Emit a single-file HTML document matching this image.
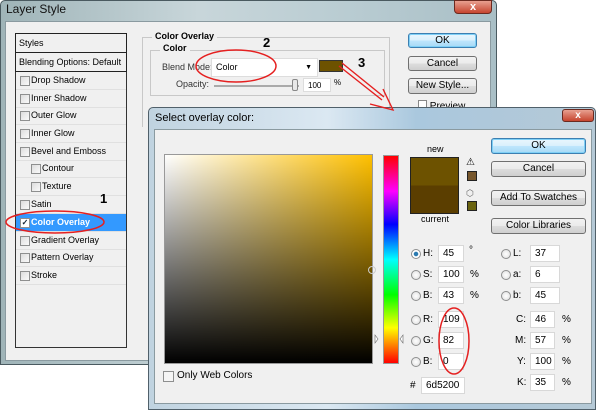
<!DOCTYPE html>
<html><head><style>
*{margin:0;padding:0;box-sizing:border-box}
body{width:600px;height:410px;position:relative;overflow:hidden;background:#fff;font-family:"Liberation Sans",sans-serif;font-size:9px;color:#000}
.a{position:absolute}
.btn{position:absolute;border:1px solid #707070;border-radius:3px;background:linear-gradient(#f2f2f2,#ebebeb 50%,#dddddd 51%,#cfcfcf);text-align:center;font-size:10px;line-height:13px}
.btn.def{border-color:#3c7fb1;background:linear-gradient(#eaf6fd,#d9f0fc 50%,#bee6fd 51%,#a7d9f5);box-shadow:0 0 0 1px #7fd0f6 inset}
.row{position:absolute;left:16px;width:110px;height:18px;border-bottom:1px solid #e0e0e0;line-height:17px}
.cb{position:absolute;width:10px;height:10px;border:1px solid #8e8f8f;background:linear-gradient(135deg,#ddd,#fafafa);top:4px}
.inp{position:absolute;background:#fff;border:1px solid #d8d8d8;height:17px;line-height:15px;padding-left:4px;font-size:10px}
.rad{position:absolute;width:10px;height:10px;border-radius:50%;border:1px solid #8e8f8f;background:radial-gradient(#fff,#ddd)}
.lb{position:absolute;font-size:10px}
</style></head><body>
<div class="a" style="left:0;top:0;width:497px;height:365px;background:linear-gradient(90deg,#9fb4b8,#c8d6da 40%,#b9ccd2 70%,#a9bfc6);border:1px solid #4a5a60;border-radius:5px 5px 0 0"></div>
<div class="a" style="left:6px;top:2px;font-size:12px;color:#111">Layer Style</div>
<div class="a" style="left:454px;top:0;width:38px;height:14px;border-radius:0 0 4px 4px;background:linear-gradient(#e8a090,#c6452f);border:1px solid #6b2a20;color:#fff;font-weight:bold;text-align:center;line-height:12px;font-size:11px">x</div>
<div class="a" style="left:5px;top:21px;width:486px;height:340px;background:#f0f0f0;border:1px solid #8a9aa0"></div>
<div class="a" style="left:15px;top:33px;width:112px;height:315px;background:#f0f0f0;border:1px solid #333"></div>
<div class="a" style="left:15px;top:33px;width:112px;height:20px;border:1px solid #222;line-height:18px;padding-left:3px;font-size:9px">Styles</div>
<div class="a" style="left:15px;top:52px;width:112px;height:20px;border:1px solid #222;line-height:18px;padding-left:3px;font-size:9px">Blending Options: Default</div>
<div class="row" style="top:72px"><span class="cb" style="left:4px"></span><span class="a" style="left:15px">Drop Shadow</span></div>
<div class="row" style="top:90px"><span class="cb" style="left:4px"></span><span class="a" style="left:15px">Inner Shadow</span></div>
<div class="row" style="top:107px"><span class="cb" style="left:4px"></span><span class="a" style="left:15px">Outer Glow</span></div>
<div class="row" style="top:125px"><span class="cb" style="left:4px"></span><span class="a" style="left:15px">Inner Glow</span></div>
<div class="row" style="top:143px"><span class="cb" style="left:4px"></span><span class="a" style="left:15px">Bevel and Emboss</span></div>
<div class="row" style="top:160px"><span class="cb" style="left:15px"></span><span class="a" style="left:26px">Contour</span></div>
<div class="row" style="top:178px"><span class="cb" style="left:15px"></span><span class="a" style="left:26px">Texture</span></div>
<div class="row" style="top:196px"><span class="cb" style="left:4px"></span><span class="a" style="left:15px">Satin</span></div>
<div class="row" style="top:214px;background:#3399ff;color:#fff;font-weight:bold"><span class="cb" style="left:4px;background:#fff;color:#123;font-size:8px;line-height:8px;text-align:center">✓</span><span class="a" style="left:15px">Color Overlay</span></div>
<div class="row" style="top:232px"><span class="cb" style="left:4px"></span><span class="a" style="left:15px">Gradient Overlay</span></div>
<div class="row" style="top:249px"><span class="cb" style="left:4px"></span><span class="a" style="left:15px">Pattern Overlay</span></div>
<div class="row" style="top:267px"><span class="cb" style="left:4px"></span><span class="a" style="left:15px">Stroke</span></div>
<div class="a" style="left:142px;top:37px;width:248px;height:90px;border:1px solid #c8c8c8;border-bottom:none"></div>
<div class="a" style="left:152px;top:31px;background:#f0f0f0;padding:0 3px;font-weight:bold">Color Overlay</div>
<div class="a" style="left:150px;top:50px;width:235px;height:46px;border:1px solid #c8c8c8"></div>
<div class="a" style="left:160px;top:43px;background:#f0f0f0;padding:0 3px;font-weight:bold">Color</div>
<div class="a" style="left:162px;top:62px;color:#333">Blend Mode:</div>
<div class="a" style="left:211px;top:58px;width:107px;height:19px;background:#fff;border:1px solid #ddd;line-height:17px;padding-left:4px">Color<span class="a" style="right:5px;top:0;font-size:7px">▼</span></div>
<div class="a" style="left:319px;top:60px;width:24px;height:12px;background:#6d5200;border:1px solid #333"></div>
<div class="a" style="left:176px;top:79px;color:#333">Opacity:</div>
<div class="a" style="left:214px;top:85px;width:85px;height:2px;background:#ccc;border:1px solid #aaa"></div>
<div class="a" style="left:292px;top:79px;width:6px;height:12px;background:#e8e8e8;border:1px solid #888;border-radius:2px"></div>
<div class="a" style="left:303px;top:78px;width:28px;height:14px;background:#fff;border:1px solid #ddd;padding-left:4px;line-height:13px;font-size:8px">100</div>
<div class="a" style="left:334px;top:78px;font-size:8px">%</div>
<div class="btn def" style="left:408px;top:33px;width:69px;height:15px">OK</div>
<div class="btn" style="left:408px;top:56px;width:69px;height:15px">Cancel</div>
<div class="btn" style="left:408px;top:78px;width:69px;height:16px">New Style...</div>
<div class="a" style="left:418px;top:100px;font-size:10px"><span style="display:inline-block;width:9px;height:9px;border:1px solid #888;background:#fff"></span> Preview</div>
<div class="a" style="left:148px;top:107px;width:448px;height:303px;background:linear-gradient(90deg,#c0d3e0,#dbe8f2 40%,#aac8de 60%,#b5c9d6);border:1px solid #50606a;border-radius:5px 5px 0 0"></div>
<div class="a" style="left:155px;top:112px;font-size:11px">Select overlay color:</div>
<div class="a" style="left:562px;top:109px;width:32px;height:13px;border-radius:3px;background:linear-gradient(#e8a090,#c6452f);border:1px solid #6b2a20;color:#fff;font-weight:bold;text-align:center;line-height:11px;font-size:10px">x</div>
<div class="a" style="left:154px;top:129px;width:438px;height:275px;background:#f0f0f0;border:1px solid #8a9aa0"></div>
<div class="a" style="left:164px;top:154px;width:209px;height:210px;border:1px solid #999;background:linear-gradient(to bottom,rgba(0,0,0,0),#000),linear-gradient(to right,#fff,#ffc000)"></div>
<div class="a" style="left:383px;top:155px;width:16px;height:209px;border:1px solid #999;background:linear-gradient(#f00,#f0f 17%,#00f 33%,#0ff 50%,#0f0 67%,#ff0 83%,#f00)"></div>
<div class="a" style="left:427px;top:144px;font-size:9px">new</div>
<div class="a" style="left:410px;top:157px;width:49px;height:57px;border:1px solid #222;background:linear-gradient(#6d5200 50%,#5b3e00 50%)"></div>
<div class="a" style="left:421px;top:214px;font-size:9px">current</div>
<div class="a" style="left:466px;top:157px;font-size:10px">⚠</div>
<div class="a" style="left:467px;top:171px;width:10px;height:10px;background:#77572c;border:1px solid #222"></div>
<div class="a" style="left:466px;top:188px;font-size:9px;color:#666">⬡</div>
<div class="a" style="left:467px;top:201px;width:10px;height:10px;background:#6b6410;border:1px solid #222"></div>
<div class="btn def" style="left:491px;top:138px;width:95px;height:16px">OK</div>
<div class="btn" style="left:491px;top:161px;width:95px;height:16px">Cancel</div>
<div class="btn" style="left:491px;top:190px;width:95px;height:16px">Add To Swatches</div>
<div class="btn" style="left:491px;top:218px;width:95px;height:16px">Color Libraries</div>
<div class="rad" style="left:411px;top:249px;background:radial-gradient(#2a7ab0 35%,#fff 45%)"></div><div class="lb" style="left:423px;top:248px">H:</div><div class="inp" style="left:438px;top:245px;width:26px">45</div><div class="lb" style="left:469px;top:245px">°</div>
<div class="rad" style="left:411px;top:270px"></div><div class="lb" style="left:423px;top:269px">S:</div><div class="inp" style="left:438px;top:266px;width:26px">100</div><div class="lb" style="left:470px;top:269px">%</div>
<div class="rad" style="left:411px;top:291px"></div><div class="lb" style="left:423px;top:290px">B:</div><div class="inp" style="left:438px;top:287px;width:26px">43</div><div class="lb" style="left:470px;top:290px">%</div>
<div class="rad" style="left:411px;top:315px"></div><div class="lb" style="left:423px;top:314px">R:</div><div class="inp" style="left:438px;top:311px;width:26px">109</div>
<div class="rad" style="left:411px;top:336px"></div><div class="lb" style="left:423px;top:335px">G:</div><div class="inp" style="left:438px;top:332px;width:26px">82</div>
<div class="rad" style="left:411px;top:357px"></div><div class="lb" style="left:423px;top:356px">B:</div><div class="inp" style="left:438px;top:353px;width:26px">0</div>
<div class="lb" style="left:410px;top:380px">#</div><div class="inp" style="left:421px;top:377px;width:44px">6d5200</div>
<div class="rad" style="left:501px;top:249px"></div><div class="lb" style="left:513px;top:248px">L:</div><div class="inp" style="left:530px;top:245px;width:30px">37</div>
<div class="rad" style="left:501px;top:270px"></div><div class="lb" style="left:513px;top:269px">a:</div><div class="inp" style="left:530px;top:266px;width:30px">6</div>
<div class="rad" style="left:501px;top:291px"></div><div class="lb" style="left:513px;top:290px">b:</div><div class="inp" style="left:530px;top:287px;width:30px">45</div>
<div class="lb" style="left:516px;top:314px">C:</div><div class="inp" style="left:530px;top:311px;width:25px">46</div><div class="lb" style="left:562px;top:314px">%</div>
<div class="lb" style="left:515px;top:335px">M:</div><div class="inp" style="left:530px;top:332px;width:25px">57</div><div class="lb" style="left:562px;top:335px">%</div>
<div class="lb" style="left:517px;top:356px">Y:</div><div class="inp" style="left:530px;top:353px;width:25px">100</div><div class="lb" style="left:562px;top:356px">%</div>
<div class="lb" style="left:517px;top:377px">K:</div><div class="inp" style="left:530px;top:374px;width:25px">35</div><div class="lb" style="left:562px;top:377px">%</div>
<div class="a" style="left:163px;top:371px;width:11px;height:11px;border:1px solid #8e8f8f;background:#f5f5f5"></div>
<div class="a" style="left:177px;top:370px;font-size:10px">Only Web Colors</div>
<div class="a" style="left:100px;top:191px;font-size:13px;font-weight:bold">1</div>
<div class="a" style="left:263px;top:35px;font-size:13px;font-weight:bold">2</div>
<div class="a" style="left:358px;top:55px;font-size:13px;font-weight:bold">3</div>
<svg class="a" style="left:0;top:0" width="600" height="410">
<ellipse cx="55" cy="222" rx="49" ry="11" fill="none" stroke="#e52020" stroke-width="1.5"/>
<ellipse cx="236" cy="66" rx="40" ry="16" fill="none" stroke="#e52020" stroke-width="1.5"/>
<ellipse cx="454" cy="341" rx="15" ry="33" fill="none" stroke="#e52020" stroke-width="1.5"/>
<path d="M339 66 L382 100 M342 63 L384 97 M370 104 L393 110 L383 89" fill="none" stroke="#e52020" stroke-width="1.4"/>
<path d="M375 335 l3 4 l-3 4z M403 335 l-3 4 l3 4z" fill="#fff" stroke="#666" stroke-width=".6"/>
<circle cx="372" cy="270" r="3.5" fill="none" stroke="#ccc"/>
</svg>
</body></html>
